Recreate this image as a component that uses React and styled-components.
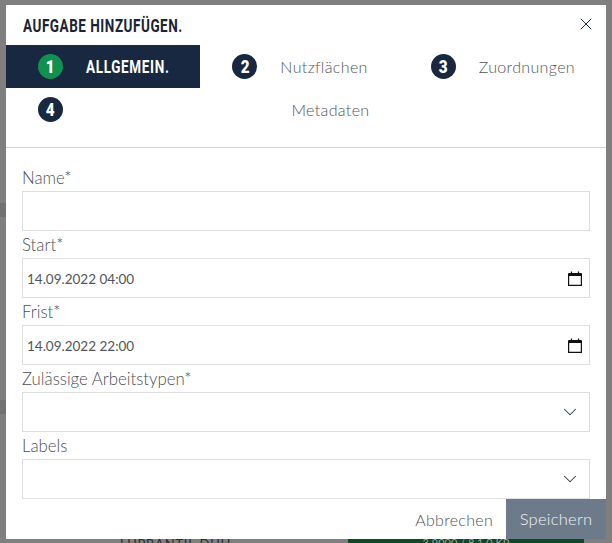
import React from 'react';
import styled, { createGlobalStyle } from 'styled-components';
import { X, ChevronDown } from 'lucide-react';

const Global = createGlobalStyle`
  html, body { margin: 0; padding: 0; background: #7f7f7f; }
  body { width: 612px; height: 543px; overflow: hidden; font-family: Lato, "Liberation Sans", sans-serif; }
`;

const Page = styled.div`
  position: relative;
  width: 612px;
  height: 543px;
  padding: 5px 6px 0;
  box-sizing: border-box;
  overflow: hidden;
  background: #7f7f7f;
`;

const BackdropCard = styled.div`
  position: absolute;
  left: 348px;
  top: 537px;
  width: 236px;
  height: 12px;
  background: #0d4a24;
  color: #8fa898;
  font-size: 11px;
  line-height: 12px;
  text-align: center;
`;

const BackdropText = styled.div`
  position: absolute;
  left: 120px;
  top: 536px;
  font-size: 13px;
  letter-spacing: 0.8px;
  color: #2d2d2d;
  white-space: nowrap;
`;

const BackdropBand = styled.div`
  position: absolute;
  left: 0;
  top: ${p => p.$top}px;
  width: 6px;
  height: 14px;
  background: #727272;
`;

const Modal = styled.div`
  position: relative;
  width: 600px;
  height: 534px;
  background: #fff;
  display: flex;
  flex-direction: column;
`;

const Header = styled.div`
  height: 40px;
  display: flex;
  align-items: center;
  justify-content: space-between;
  padding: 0 10px 0 17px;
  flex: none;
`;

const Title = styled.h5`
  margin: 0;
  font-family: Roboto, "Liberation Sans", sans-serif;
  font-weight: 700;
  font-size: 18px;
  letter-spacing: 0.7px;
  color: #1a2433;
  text-transform: uppercase;
  white-space: nowrap;
  transform: scaleX(0.75);
  transform-origin: left center;
`;

const Close = styled.button`
  border: 0;
  background: none;
  padding: 0;
  margin-top: -2px;
  display: flex;
  color: #1a2a40;
`;

const Steps = styled.div`
  display: flex;
  flex-wrap: wrap;
  border-bottom: 1px solid #d4d4d4;
  padding-bottom: 16px;
  flex: none;
`;

const Step = styled.div`
  flex: 1 1 auto;
  height: 43px;
  box-sizing: border-box;
  padding: 0 8px 0 32px;
  display: flex;
  align-items: center;
  background: ${p => (p.$active ? '#172840' : 'transparent')};
`;

const Badge = styled.span`
  width: 25px;
  height: 25px;
  border-radius: 50%;
  flex: none;
  display: flex;
  align-items: center;
  justify-content: center;
  background: ${p => (p.$active ? '#0f9150' : '#172840')};
`;

const Digit = styled.span`
  color: #fff;
  font-family: Roboto, "Liberation Sans", sans-serif;
  font-weight: 900;
  font-size: 18px;
  transform: scaleX(0.85);
`;

const StepLabel = styled.span`
  flex: 1;
  text-align: center;
  white-space: nowrap;
  font-size: 16px;
  letter-spacing: 0.35px;
  font-weight: 300;
  color: #50555c;
`;

const ActiveLabel = styled.span`
  flex: 1;
  display: flex;
  justify-content: center;
`;

const ActiveText = styled.span`
  font-family: Roboto, "Liberation Sans", sans-serif;
  font-weight: 700;
  font-size: 18px;
  letter-spacing: 0.9px;
  margin: 0 -14px;
  color: #fff;
  white-space: nowrap;
  transform: scaleX(0.75);
`;

const Form = styled.div`
  padding: 16px 16px 0;
  flex: 1;
`;

const Label = styled.label`
  display: block;
  height: 27px;
  line-height: 27px;
  font-size: 16.8px;
  font-weight: 300;
  color: #4a4f56;
`;

const FieldBox = styled.div`
  height: 40px;
  box-sizing: border-box;
  border: 1px solid #dedede;
  display: flex;
  align-items: center;
  justify-content: space-between;
  padding: 0 7px 0 4px;
`;

const Value = styled.span`
  font-size: 13.5px;
  padding-top: 1px;
  color: #50555c;
`;

const Chevron = styled(ChevronDown)`
  color: #2a3644;
  margin-right: 1px;
`;

const Footer = styled.div`
  display: flex;
  justify-content: flex-end;
  align-items: stretch;
  height: 40px;
  flex: none;
`;

const Cancel = styled.button`
  border: 0;
  background: none;
  padding: 0 13px 0 0;
  font-family: inherit;
  font-size: 16px;
  font-weight: 300;
  letter-spacing: 0.3px;
  color: #4a4f56;
`;

const Save = styled.button`
  border: 0;
  width: 100px;
  padding: 0;
  background: #6c7a8a;
  color: #f2f4f6;
  font-family: inherit;
  font-size: 16.5px;
  font-weight: 300;
  letter-spacing: 0.25px;
`;

const Calendar = () => (
  <svg width="14" height="15" viewBox="0 0 14 15" fill="none">
    <path d="M0.6 3h12.8v11.4H0.6z" stroke="#111" strokeWidth="1.2" fill="#fff" />
    <path d="M0.5 2h13v3h-13z" fill="#111" />
    <path d="M3.5 0.5v2M10.5 0.5v2" stroke="#111" strokeWidth="1.2" />
  </svg>
);

const steps = ['Allgemein.', 'Nutzflächen', 'Zuordnungen', 'Metadaten'];

export default function App() {
  return (
    <Page>
      <Global />
      <BackdropBand $top={203} />
      <BackdropBand $top={400} />
      <BackdropText>LUPRANTIL DUH</BackdropText>
      <BackdropCard>3 9000 / 8 1 0 KP</BackdropCard>
      <Modal>
        <Header>
          <Title>Aufgabe hinzufügen.</Title>
          <Close aria-label="Schließen"><X size={20} strokeWidth={1.2} /></Close>
        </Header>
        <Steps>
          {steps.map((s, i) => (
            <Step key={s} $active={i === 0}>
              <Badge $active={i === 0}><Digit>{i + 1}</Digit></Badge>
              {i === 0
                ? <ActiveLabel><ActiveText>{s.toUpperCase()}</ActiveText></ActiveLabel>
                : <StepLabel>{s}</StepLabel>}
            </Step>
          ))}
        </Steps>
        <Form>
          <Label>Name*</Label>
          <FieldBox />
          <Label>Start*</Label>
          <FieldBox><Value>14.09.2022 04:00</Value><Calendar /></FieldBox>
          <Label>Frist*</Label>
          <FieldBox><Value>14.09.2022 22:00</Value><Calendar /></FieldBox>
          <Label>Zulässige Arbeitstypen*</Label>
          <FieldBox><span /><Chevron size={22} strokeWidth={1.1} /></FieldBox>
          <Label>Labels</Label>
          <FieldBox><span /><Chevron size={22} strokeWidth={1.1} /></FieldBox>
        </Form>
        <Footer>
          <Cancel>Abbrechen</Cancel>
          <Save>Speichern</Save>
        </Footer>
      </Modal>
    </Page>
  );
}
